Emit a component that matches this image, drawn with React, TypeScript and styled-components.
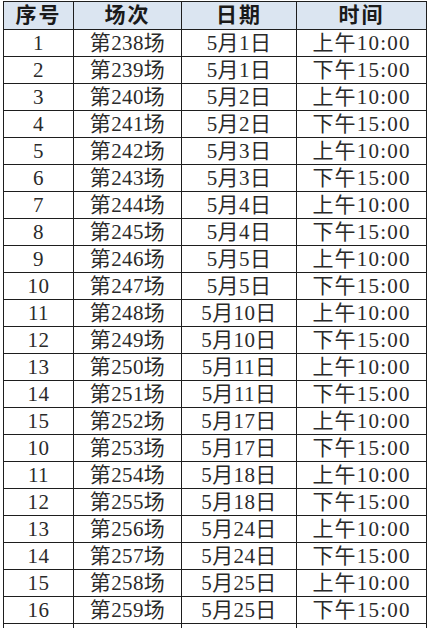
import styled, { createGlobalStyle } from 'styled-components';

const GlobalStyle = createGlobalStyle`
  html, body {
    margin: 0;
    padding: 0;
    background: #fff;
  }
  body {
    font-family: 'Liberation Serif', 'Noto Sans CJK SC', serif;
  }
`;

const Page = styled("div")`
  width: 429px;
  height: 628px;
  overflow: hidden;
  padding: 1px 0 0 3px;
  box-sizing: border-box;
`;

const Table = styled("table")`
  border-collapse: collapse;
  table-layout: fixed;
  width: 423px;
`;

const Col = styled("col")<{ $w: number }>`
  width: ${(p) => p.$w}px;
`;

const HeadCell = styled("th")`
  height: 27px;
  padding: 0;
  border: 1px solid #1e1e1e;
  background: #dbe5f1;
  color: #1a1a1a;
  font-family: 'Liberation Serif', 'Noto Sans CJK SC', serif;
  font-weight: 700;
  font-size: 21px;
  line-height: 27px;
  text-align: center;
  letter-spacing: 2px;
`;

const Cell = styled("td")<{ $spaced?: boolean }>`
  height: 26px;
  padding: 0;
  border: 1px solid #1e1e1e;
  color: #2a2a2a;
  font-family: 'Liberation Serif', 'Noto Sans CJK SC', serif;
  font-weight: 400;
  font-size: 21px;
  line-height: 26px;
  text-align: center;
  white-space: nowrap;
  letter-spacing: ${(p) => (p.$spaced ? '1.2px' : '0.4px')};
`;

type Row = { no: number; game: number; day: number };

const rows: Row[] = [
  { no: 1, game: 238, day: 1 },
  { no: 2, game: 239, day: 1 },
  { no: 3, game: 240, day: 2 },
  { no: 4, game: 241, day: 2 },
  { no: 5, game: 242, day: 3 },
  { no: 6, game: 243, day: 3 },
  { no: 7, game: 244, day: 4 },
  { no: 8, game: 245, day: 4 },
  { no: 9, game: 246, day: 5 },
  { no: 10, game: 247, day: 5 },
  { no: 11, game: 248, day: 10 },
  { no: 12, game: 249, day: 10 },
  { no: 13, game: 250, day: 11 },
  { no: 14, game: 251, day: 11 },
  { no: 15, game: 252, day: 17 },
  { no: 10, game: 253, day: 17 },
  { no: 11, game: 254, day: 18 },
  { no: 12, game: 255, day: 18 },
  { no: 13, game: 256, day: 24 },
  { no: 14, game: 257, day: 24 },
  { no: 15, game: 258, day: 25 },
  { no: 16, game: 259, day: 25 },
];

const App = () => {
  return (
    <>
      <GlobalStyle />
      <Page>
        <Table>
          <colgroup>
            <Col $w={70} />
            <Col $w={108} />
            <Col $w={115} />
            <Col $w={130} />
          </colgroup>
          <thead>
            <tr>
              <HeadCell>序号</HeadCell>
              <HeadCell>场次</HeadCell>
              <HeadCell>日期</HeadCell>
              <HeadCell>时间</HeadCell>
            </tr>
          </thead>
          <tbody>
            {rows.map((r, i) => (
              <tr key={r.game}>
                <Cell>{r.no}</Cell>
                <Cell>第{r.game}场</Cell>
                <Cell>5月{r.day}日</Cell>
                <Cell $spaced>{i % 2 === 0 ? '上午10:00' : '下午15:00'}</Cell>
              </tr>
            ))}
            <tr>
              <Cell />
              <Cell />
              <Cell />
              <Cell />
            </tr>
          </tbody>
        </Table>
      </Page>
    </>
  );
};

export default App;
